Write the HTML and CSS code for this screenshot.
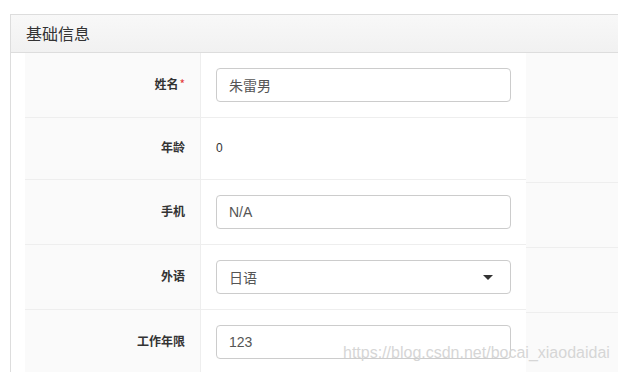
FILE: index.html
```html
<!DOCTYPE html>
<html lang="zh-CN">
<head>
    <meta charset="UTF-8">
    <meta name="viewport" content="width=device-width, initial-scale=1.0">
    <title>基础信息</title>
    <link rel="stylesheet" href="styles.css">
</head>
<body>
    <div class="panel">
        <div class="panel-heading">基础信息</div>
        <div class="panel-body">
            <div class="form-table">
                <div class="form-row">
                    <div class="form-label"><span>姓名<sup class="required">*</sup></span></div>
                    <div class="form-value">
                        <input type="text" class="form-control" value="朱雷男">
                    </div>
                </div>
                <div class="form-row">
                    <div class="form-label"><span>年龄</span></div>
                    <div class="form-value">
                        <p class="form-static">0</p>
                    </div>
                </div>
                <div class="form-row">
                    <div class="form-label"><span>手机</span></div>
                    <div class="form-value">
                        <input type="text" class="form-control" value="N/A">
                    </div>
                </div>
                <div class="form-row">
                    <div class="form-label"><span>外语</span></div>
                    <div class="form-value">
                        <div class="form-control select-box">
                            <span>日语</span>
                            <span class="caret"></span>
                        </div>
                    </div>
                </div>
                <div class="form-row">
                    <div class="form-label"><span>工作年限</span></div>
                    <div class="form-value">
                        <input type="text" class="form-control" value="123">
                    </div>
                </div>
            </div>
            <!-- second column of the form, cut off by the window -->
            <div class="form-table side">
                <div class="side-row"></div>
                <div class="side-row"></div>
                <div class="side-row"></div>
                <div class="side-row"></div>
                <div class="side-row"></div>
            </div>
        </div>
    </div>

    <div class="watermark">https://blog.csdn.net/bocai_xiaodaidai</div>
</body>
</html>
```

FILE: styles.css
```css
html, body {
    margin: 0;
    height: 100%;
    overflow: hidden;
    background-color: #fff;
}
body {
    font-family: "Liberation Sans", "Noto Sans CJK SC", sans-serif;
    color: #333;
    position: relative;
}
.panel {
    margin: 14px 0 0 10px;
    border-top: 1px solid #ddd;
    border-left: 1px solid #ddd;
}
.panel-heading {
    height: 37px;
    line-height: 37px;
    padding: 0 15px;
    font-size: 16px;
    color: #333;
    font-family: "Noto Sans CJK SC", sans-serif;
    background-image: linear-gradient(#f8f8f8, #f1f1f1);
    border-bottom: 1px solid #ddd;
}
.panel-body {
    display: flex;
    padding-left: 14px;
}
.form-table {
    width: 501px;
}
.form-table.side {
    flex: 1;
    background-color: #fafafa;
}
.form-row {
    display: flex;
    border-bottom: 1px solid #eee;
}
.form-label {
    width: 176px;
    box-sizing: border-box;
    padding: 0 15px 4px 0;
    display: flex;
    align-items: center;
    justify-content: flex-end;
    background-color: #fafafa;
    border-right: 1px solid #eee;
    font-family: "Noto Sans CJK SC", sans-serif;
    font-size: 12px;
    font-weight: bold;
    color: #333;
}
.required {
    color: #e4393c;
    font-size: 12px;
    font-weight: normal;
    vertical-align: top;
    position: relative;
    top: 0;
    margin-left: 1px;
}
.form-value {
    flex: 1;
    padding: 15px;
    background-color: #fff;
}
.form-static {
    margin: 0;
    line-height: 31px;
    font-size: 12px;
    color: #333;
}
.form-control {
    display: block;
    width: 100%;
    height: 34px;
    box-sizing: border-box;
    padding: 6px 12px;
    border: 1px solid #ccc;
    border-radius: 4px;
    font-family: "Liberation Sans", "Noto Sans CJK SC", sans-serif;
    font-size: 14px;
    color: #555;
    background-color: #fff;
    outline: none;
}
.select-box {
    display: flex;
    align-items: center;
    justify-content: space-between;
    padding-right: 17px;
}
.caret {
    width: 0;
    height: 0;
    border-left: 5px solid transparent;
    border-right: 5px solid transparent;
    border-top: 5px solid #333;
}
.side-row {
    height: 64px;
    border-bottom: 1px solid #eee;
}
.watermark {
    position: absolute;
    left: 343px;
    top: 344px;
    font-family: "Liberation Sans", sans-serif;
    font-size: 16px;
    line-height: 18px;
    color: #d6d6d6;
    white-space: nowrap;
}
```
